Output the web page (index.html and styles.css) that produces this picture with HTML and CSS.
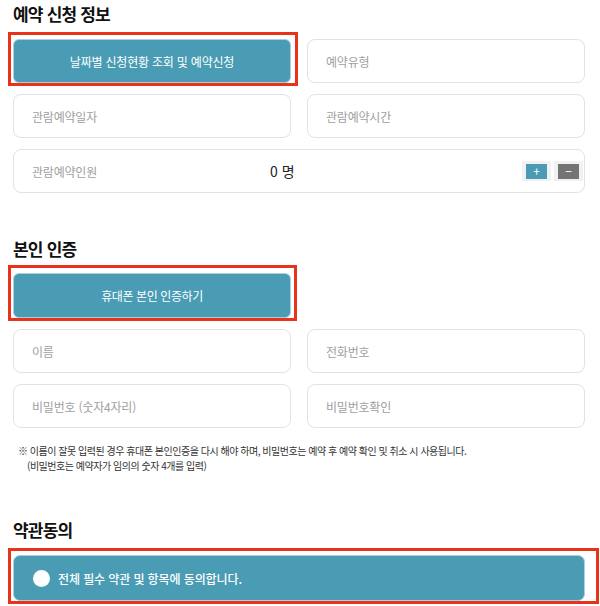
FILE: index.html
```html
<!DOCTYPE html>
<html lang="ko">
<head>
<meta charset="utf-8">
<link rel="stylesheet" href="styles.css">
</head>
<body>
<div class="page">
  <h2 class="sec-title">예약 신청 정보</h2>
  <div class="grid">
    <div class="marked m1"><button class="btn">날짜별 신청현황 조회 및 예약신청</button></div>
    <div class="field">예약유형</div>
    <div class="field">관람예약일자</div>
    <div class="field">관람예약시간</div>
    <div class="field full count-row">
      <span class="count-label">관람예약인원</span>
      <span class="count-value">0 명</span>
      <span class="spacer"></span>
      <span class="step"><span class="step-in plus">+</span></span>
      <span class="step"><span class="step-in minus">−</span></span>
    </div>
  </div>

  <h2 class="sec-title sec-gap">본인 인증</h2>
  <div class="grid">
    <div class="marked m2"><button class="btn btn-tall">휴대폰 본인 인증하기</button></div>
    <div></div>
    <div class="field">이름</div>
    <div class="field">전화번호</div>
    <div class="field">비밀번호 (숫자4자리)</div>
    <div class="field">비밀번호확인</div>
  </div>
  <p class="note">※ 이름이 잘못 입력된 경우 휴대폰 본인인증을 다시 해야 하며, 비밀번호는 예약 후 예약 확인 및 취소 시 사용됩니다.<br><span class="note-indent">(비밀번호는 예약자가 임의의 숫자 4개를 입력)</span></p>

  <h2 class="sec-title sec-gap3">약관동의</h2>
  <div class="marked m3">
    <div class="agree"><span class="radio"></span><span class="agree-text">전체 필수 약관 및 항목에 동의합니다.</span></div>
  </div>
</div>
</body>
</html>
```
FILE: styles.css
```css
* { box-sizing: border-box; }
html, body { margin: 0; padding: 0; background: #fff; }
body {
  font-family: "Noto Sans CJK KR", "Noto Sans", sans-serif;
  color: #222;
  width: 600px;
  height: 606px;
  overflow: hidden;
}
.page {
  padding: 2px 15px 0 13px;
}
.sec-title {
  margin: 0 0 13px 0;
  font-size: 17px;
  line-height: 24px;
  font-weight: 700;
  color: #111;
  letter-spacing: -0.8px;
}
.sec-gap { margin-top: 44px; margin-bottom: 12px; }
.sec-gap3 { margin-top: 45px; margin-bottom: 13px; }
.grid {
  display: grid;
  grid-template-columns: 278px 278px;
  column-gap: 16px;
  row-gap: 11px;
  width: 572px;
}
.full { grid-column: 1 / 3; }
.field {
  height: 44px;
  border: 1px solid #e2e2e2;
  border-radius: 8px;
  padding-left: 18px;
  display: flex;
  align-items: center;
  font-size: 12px;
  color: #a0a0a0;
  letter-spacing: -0.2px;
}
.marked { position: relative; }
.marked::before {
  content: "";
  position: absolute;
  border: 3px solid #e8321a;
  pointer-events: none;
}
.m1::before { top: -7px; left: -5px; right: -7px; bottom: -3px; }
.m2::before { top: -8px; left: -5px; right: -6px; bottom: -3px; }
.m3::before { top: -7px; left: -5px; right: -14px; bottom: -3px; }
.btn {
  display: block;
  width: 100%;
  height: 44px;
  border: 1px solid #a9d0dc;
  border-radius: 6px;
  background: #4a9cb4;
  color: #fff;
  font-family: inherit;
  font-size: 12px;
  letter-spacing: -0.2px;
  padding: 0;
  cursor: pointer;
}
.btn-tall { height: 45px; letter-spacing: -0.4px; }
.count-row { padding-right: 1px; }
.count-label { width: 238px; flex: none; }
.count-value { color: #222; font-size: 14px; letter-spacing: 0; }
.spacer { flex: 1; }
.step {
  width: 29px;
  height: 20px;
  background: #f1f1f1;
  display: flex;
  align-items: center;
  justify-content: center;
  margin-left: 3px;
}
.step-in {
  width: 21px;
  height: 15px;
  display: flex;
  align-items: center;
  justify-content: center;
  color: #fff;
  font-size: 12px;
  line-height: 1;
}
.plus { background: #4a9cb4; }
.minus { background: #747474; }
.note {
  margin: 15px 0 0 5px;
  font-size: 10px;
  line-height: 15px;
  color: #333;
  letter-spacing: -0.48px;
}
.note-indent { padding-left: 9px; }
.agree {
  height: 46px;
  width: 572px;
  border: 1px solid #a9d0dc;
  border-radius: 7px;
  background: #4a9cb4;
  display: flex;
  align-items: center;
  padding-left: 19px;
}
.radio {
  width: 17px;
  height: 17px;
  border-radius: 50%;
  background: #fff;
  flex: none;
}
.agree-text {
  margin-left: 8px;
  color: #fff;
  font-size: 12px;
  font-weight: 500;
  letter-spacing: -0.1px;
}
```
